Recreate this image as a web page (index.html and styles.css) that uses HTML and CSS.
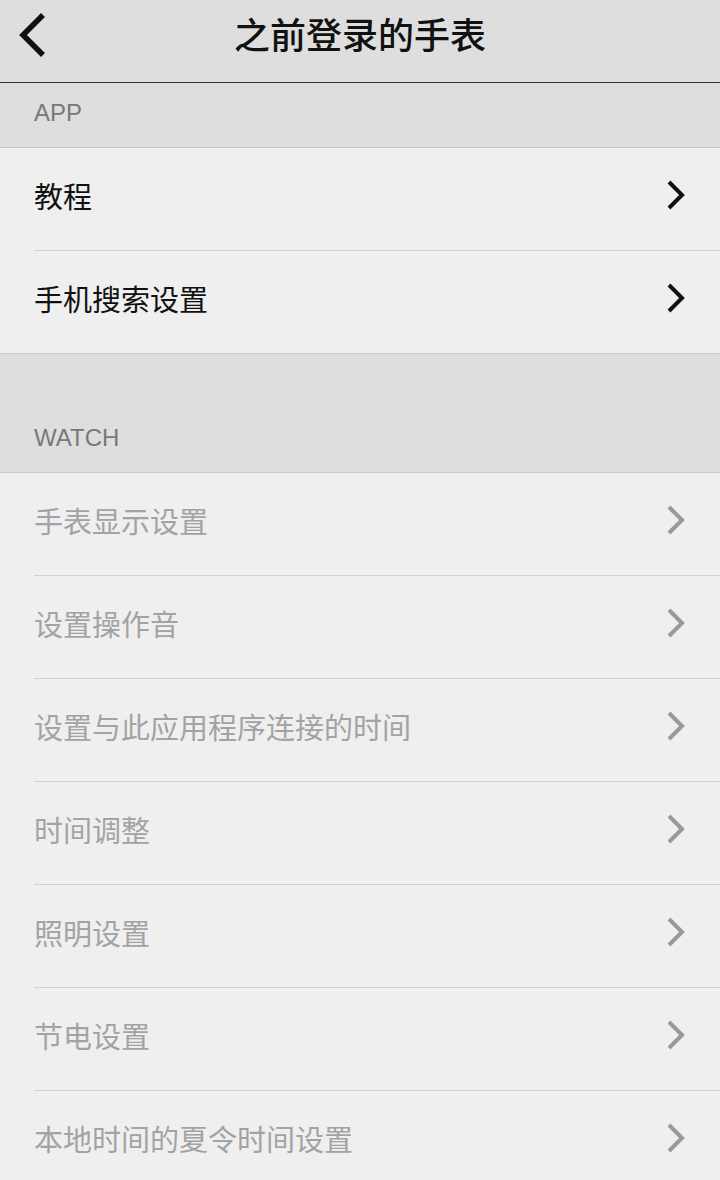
FILE: index.html
```html
<!DOCTYPE html>
<html lang="zh-CN">
<head>
    <meta charset="UTF-8">
    <meta name="viewport" content="width=device-width, initial-scale=1.0">
    <title>之前登录的手表</title>
    <link rel="stylesheet" href="styles.css">
</head>

<body>
    <div id="header">
        <button class="back">
            <svg width="32" height="48" viewBox="0 0 32 48"><path d="M27 4 L7 24 L27 44" fill="none" stroke="#111" stroke-width="5.5"/></svg>
        </button>
        <div class="title">之前登录的手表</div>
    </div>

    <div class="section-title first">APP</div>
    <div class="list">
        <div class="row"><span>教程</span><svg class="chevron" width="20" height="32" viewBox="0 0 20 32"><path d="M3 3 L16 16 L3 29" fill="none" stroke="#111" stroke-width="4"/></svg></div>
        <div class="row"><span>手机搜索设置</span><svg class="chevron" width="20" height="32" viewBox="0 0 20 32"><path d="M3 3 L16 16 L3 29" fill="none" stroke="#111" stroke-width="4"/></svg></div>
    </div>

    <div class="section-title">WATCH</div>
    <div class="list disabled">
        <div class="row"><span>手表显示设置</span><svg class="chevron" width="20" height="32" viewBox="0 0 20 32"><path d="M3 3 L16 16 L3 29" fill="none" stroke="#999" stroke-width="4"/></svg></div>
        <div class="row"><span>设置操作音</span><svg class="chevron" width="20" height="32" viewBox="0 0 20 32"><path d="M3 3 L16 16 L3 29" fill="none" stroke="#999" stroke-width="4"/></svg></div>
        <div class="row"><span>设置与此应用程序连接的时间</span><svg class="chevron" width="20" height="32" viewBox="0 0 20 32"><path d="M3 3 L16 16 L3 29" fill="none" stroke="#999" stroke-width="4"/></svg></div>
        <div class="row"><span>时间调整</span><svg class="chevron" width="20" height="32" viewBox="0 0 20 32"><path d="M3 3 L16 16 L3 29" fill="none" stroke="#999" stroke-width="4"/></svg></div>
        <div class="row"><span>照明设置</span><svg class="chevron" width="20" height="32" viewBox="0 0 20 32"><path d="M3 3 L16 16 L3 29" fill="none" stroke="#999" stroke-width="4"/></svg></div>
        <div class="row"><span>节电设置</span><svg class="chevron" width="20" height="32" viewBox="0 0 20 32"><path d="M3 3 L16 16 L3 29" fill="none" stroke="#999" stroke-width="4"/></svg></div>
        <div class="row"><span>本地时间的夏令时间设置</span><svg class="chevron" width="20" height="32" viewBox="0 0 20 32"><path d="M3 3 L16 16 L3 29" fill="none" stroke="#999" stroke-width="4"/></svg></div>
    </div>
</body>
</html>
```

FILE: styles.css
```css
* {
    box-sizing: border-box;
}

body {
    font-family: 'Noto Sans CJK SC', 'Noto Sans', sans-serif;
    background-color: #efefef;
    margin: 0;
    padding: 0;
    height: 1180px;
    overflow: hidden;
}

#header {
    height: 83px;
    background-color: #dedede;
    border-bottom: 1px solid #333;
    display: flex;
    align-items: center;
    justify-content: center;
    position: relative;
}

#header .back {
    position: absolute;
    left: 16px;
    top: 11px;
    padding: 0;
    border: none;
    background: none;
    display: flex;
}

#header .title {
    font-size: 36px;
    font-weight: 500;
    color: #111;
    margin-top: -16px;
}

.section-title {
    background-color: #dedede;
    color: #787878;
    font-family: 'Liberation Sans', Arial, sans-serif;
    font-size: 24px;
    padding: 0 34px 20px;
    height: 119px;
    display: flex;
    align-items: flex-end;
    border-bottom: 1px solid #c8c8c8;
}

.section-title.first {
    height: 65px;
    padding-bottom: 20px;
}

.list {
    padding-left: 34px;
    background-color: #efefef;
    border-bottom: 1px solid #cdcdcd;
}

.row {
    height: 103px;
    display: flex;
    align-items: center;
    justify-content: space-between;
    padding-right: 34px;
    border-bottom: 1px solid #d2d2d2;
    font-size: 29px;
    color: #111;
}

.row:last-child {
    height: 102px;
    border-bottom: none;
}

.row span {
    margin-top: -8px;
}

.row .chevron {
    margin-top: -8px;
}

.disabled .row {
    color: #a3a3a3;
}
```
